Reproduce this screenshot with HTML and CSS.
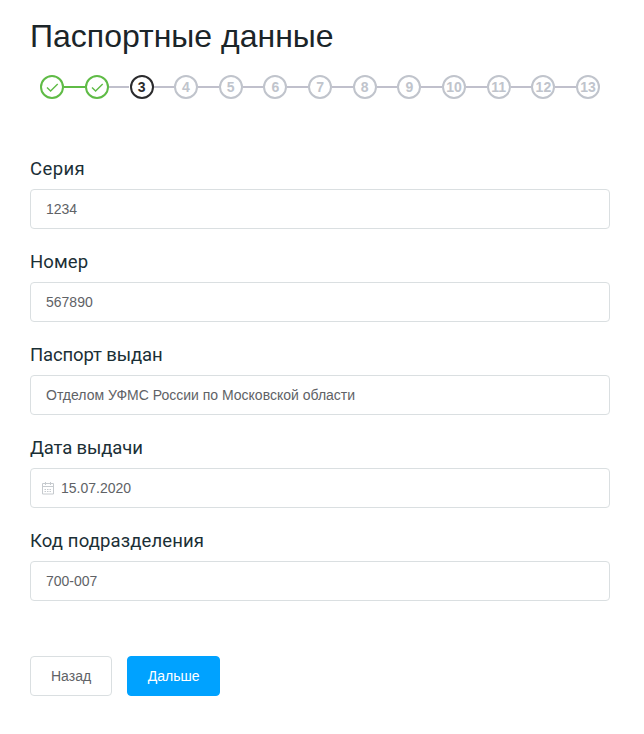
FILE: index.html
```html
<!DOCTYPE html>
<html lang="ru">
<head>
<meta charset="utf-8">
<title>Паспортные данные</title>
<link rel="stylesheet" href="styles.css">
</head>
<body>
<main class="page">
  <h1 class="title">Паспортные данные</h1>
  <ol class="steps">
    <li class="step done"><span class="dot"><svg viewBox="0 0 14 14"><path d="M2 7.6 5.6 11.1 12.700 4.100"/></svg></span></li>
    <li class="step done"><span class="dot"><svg viewBox="0 0 14 14"><path d="M2 7.6 5.6 11.1 12.700 4.100"/></svg></span></li>
    <li class="step current"><span class="dot">3</span></li>
    <li class="step"><span class="dot">4</span></li>
    <li class="step"><span class="dot">5</span></li>
    <li class="step"><span class="dot">6</span></li>
    <li class="step"><span class="dot">7</span></li>
    <li class="step"><span class="dot">8</span></li>
    <li class="step"><span class="dot">9</span></li>
    <li class="step"><span class="dot">10</span></li>
    <li class="step"><span class="dot">11</span></li>
    <li class="step"><span class="dot">12</span></li>
    <li class="step"><span class="dot">13</span></li>
  </ol>
  <form class="form">
    <div class="field"><label class="label loose" for="series">Серия</label><input class="input" id="series" value="1234"></div>
    <div class="field"><label class="label" for="number">Номер</label><input class="input" id="number" value="567890"></div>
    <div class="field"><label class="label tight" for="issuer">Паспорт выдан</label><input class="input" id="issuer" value="Отделом УФМС России по Московской области"></div>
    <div class="field"><label class="label tight" for="date">Дата выдачи</label>
      <div class="input date">
        <svg class="calendar" viewBox="0 0 14 14"><path d="M1.500 2.500h11v10.500h-11zM1.500 5.500h11M4.500 1v3M9.500 1v3"/><path class="days" d="M3.500 8.500h7M3.500 10.500h7"/></svg>
        <input class="bare" id="date" value="15.07.2020">
      </div>
    </div>
    <div class="field"><label class="label" for="code">Код подразделения</label><input class="input" id="code" value="700-007"></div>
    <div class="actions"><button class="button" type="button">Назад</button><button class="button primary" type="button">Дальше</button></div>
  </form>
</main>
</body>
</html>
```
FILE: styles.css
```css
* { box-sizing: border-box; }
body { margin: 0; background: #fff; color: #1b2529; font-family: "Liberation Sans", Arial, sans-serif; }
.page { padding: 16px 34px 0 30px; }
.title { margin: 0; font-size: 32px; line-height: 40px; font-weight: 400; color: #1b2529; }
.steps { display: flex; margin: 19px 10px 0; padding: 0; list-style: none; }
.step { display: flex; align-items: center; flex: 1; color: #c0c4cc; }
.step:last-child { flex: none; }
.step::after { content: ""; flex: 1; height: 2px; background: #c0c0cc; }
.step:last-child::after { display: none; }
.dot { display: flex; align-items: center; justify-content: center; width: 24px; height: 24px; border: 2px solid; border-radius: 50%; font-size: 14px; font-weight: 700; }
.dot svg { width: 14px; height: 14px; fill: none; stroke: currentColor; stroke-width: 1.4; }
.done { color: #5fbb46; }
.done:first-child::after { background: #5fbb46; }
.current { color: #2b2b2d; }
.current .dot { position: relative; left: 0.4px; }
.form { margin-top: 60px; }
.field { height: 93px; }
.label { display: block; height: 30px; line-height: 20px; font-family: Roboto, sans-serif; font-size: 18.5px; letter-spacing: 0.13px; color: #1b2f36; }
.loose { letter-spacing: 0.4px; }
.tight { letter-spacing: -0.13px; }
.input { display: block; width: 100%; height: 40px; padding: 0 15px; border: 1px solid #dadfe1; border-radius: 4px; font: 14px "Liberation Sans", Arial, sans-serif; color: #606266; }
.date { display: flex; align-items: center; padding: 0 10px; }
.calendar { width: 14px; height: 14px; margin-right: 6px; fill: none; stroke: #c6cace; }
.days { stroke-dasharray: 1.500 1; }
.bare { flex: 1; padding: 0; border: 0; font: inherit; color: inherit; }
.actions { display: flex; gap: 15px; margin-top: 32px; }
.button { height: 40px; padding: 0 20px; border: 1px solid #dadfe1; border-radius: 4px; background: #fff; font: 14px "Liberation Sans", Arial, sans-serif; color: #606266; }
.primary { width: 93px; padding: 0; background: #00a2ff; border-color: #00a2ff; color: #fff; }
```
